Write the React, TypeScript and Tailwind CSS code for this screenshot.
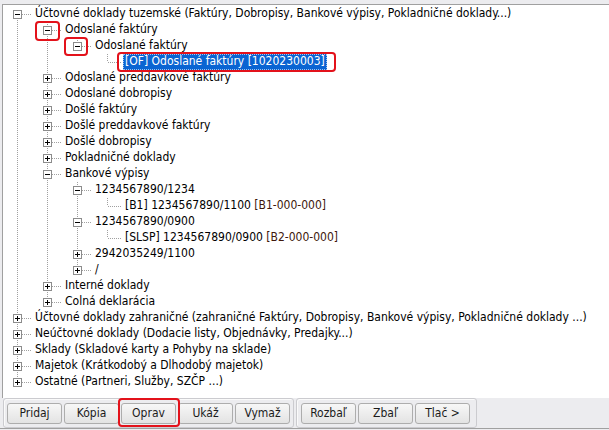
import type { ReactNode } from 'react';

type Node = {
  label: ReactNode;
  children?: Node[];
  expanded?: boolean;
  selected?: boolean;
};

type FlatRow = {
  node: Node;
  level: number;
  lines: boolean[];
  hasNext: boolean;
  first: boolean;
};

const code = (s: string) => <span className="text-[#40180c]">{s}</span>;

const tree: Node[] = [
  {
    label: 'Účtovné doklady tuzemské (Faktúry, Dobropisy, Bankové výpisy, Pokladničné doklady...)',
    expanded: true,
    children: [
      {
        label: 'Odoslané faktúry',
        expanded: true,
        children: [
          {
            label: 'Odoslané faktúry',
            expanded: true,
            children: [{ label: '[OF] Odoslané faktúry [1020230003]', selected: true }],
          },
        ],
      },
      { label: 'Odoslané preddavkové faktúry', children: [] },
      { label: 'Odoslané dobropisy', children: [] },
      { label: 'Došlé faktúry', children: [] },
      { label: 'Došlé preddavkové faktúry', children: [] },
      { label: 'Došlé dobropisy', children: [] },
      { label: 'Pokladničné doklady', children: [] },
      {
        label: 'Bankové výpisy',
        expanded: true,
        children: [
          {
            label: '1234567890/1234',
            expanded: true,
            children: [{ label: <>[B1] 1234567890/1100 {code('[B1-000-000]')}</> }],
          },
          {
            label: '1234567890/0900',
            expanded: true,
            children: [{ label: <>[SLSP] 1234567890/0900 {code('[B2-000-000]')}</> }],
          },
          { label: '2942035249/1100', children: [] },
          { label: '/', children: [] },
        ],
      },
      { label: 'Interné doklady', children: [] },
      { label: 'Colná deklarácia', children: [] },
    ],
  },
  { label: 'Účtovné doklady zahraničné (zahraničné Faktúry, Dobropisy, Bankové výpisy, Pokladničné doklady ...)', children: [] },
  { label: 'Neúčtovné doklady (Dodacie listy, Objednávky, Predajky...)', children: [] },
  { label: 'Sklady (Skladové karty a Pohyby na sklade)', children: [] },
  { label: 'Majetok (Krátkodobý a Dlhodobý majetok)', children: [] },
  { label: 'Ostatné (Partneri, Služby, SZČP ...)', children: [] },
];

const flatten = (nodes: Node[], level = 0, lines: boolean[] = []): FlatRow[] =>
  nodes.flatMap((node, i) => {
    const hasNext = i < nodes.length - 1;
    const row: FlatRow = { node, level, lines, hasNext, first: level === 0 && i === 0 };
    const kids = node.expanded && node.children ? flatten(node.children, level + 1, [...lines, hasNext]) : [];
    return [row, ...kids];
  });

const IND = 30;
const DOT = '#a0a0a0';

const TreeRow = ({ row }: { row: FlatRow }) => {
  const { node, level, lines, hasNext, first } = row;
  const w = IND * level + IND;
  const cx = 14 + IND * level;
  const hasBox = node.children !== undefined;
  const dot = { stroke: DOT, strokeDasharray: '1 1', shapeRendering: 'crispEdges' as const };

  return (
    <div className="flex h-[16px] items-center">
      <svg width={w} height={16} className="shrink-0">
        {lines.map((on, k) =>
          on ? <line key={k} x1={14 + IND * k + 0.5} y1={0} x2={14 + IND * k + 0.5} y2={16} {...dot} /> : null,
        )}
        {!first && <line x1={cx + 0.5} y1={0} x2={cx + 0.5} y2={8} {...dot} />}
        {hasNext && <line x1={cx + 0.5} y1={8} x2={cx + 0.5} y2={16} {...dot} />}
        <line x1={cx + 1} y1={8.5} x2={w - 2} y2={8.5} {...dot} />
        {hasBox && (
          <g shapeRendering="crispEdges">
            <rect x={cx - 4 + 0.5} y={4.5} width={8} height={8} fill="#fff" stroke="#8c8c8c" />
            <line x1={cx - 2} y1={8.5} x2={cx + 3} y2={8.5} stroke="#000" />
            {!node.expanded && <line x1={cx + 0.5} y1={6} x2={cx + 0.5} y2={11} stroke="#000" />}
          </g>
        )}
      </svg>
      <span
        className={
          node.selected
            ? 'h-[16px] whitespace-nowrap bg-[#0a64d2] px-[2px] leading-[15px] text-white outline-1 outline-dotted outline-offset-[-1px] outline-[#9ec4f0]'
            : 'h-[16px] whitespace-nowrap px-[2px] leading-[15px] text-black'
        }
      >
        {node.label}
      </span>
    </div>
  );
};

const Btn = ({ children }: { children: ReactNode }) => (
  <button className="flex h-[21px] w-[55px] items-center justify-center rounded-[3px] border border-[#adadad] bg-gradient-to-b from-[#f7f7f7] to-[#e3e3e3] text-[12px] text-[#1b1b1b]">
    {children}
  </button>
);

const Mark = ({ cls }: { cls: string }) => (
  <div className={`pointer-events-none absolute rounded-[4px] border-2 border-[#e3121b] ${cls}`} />
);

export default function App() {
  const rows = flatten(tree);
  return (
    <div
      className="relative h-[430px] w-[609px] overflow-hidden bg-[#ececef] text-[12px]"
      style={{ fontFamily: '"DejaVu Sans Condensed", "DejaVu Sans", sans-serif' }}
    >
      <div className="h-[4px]" />
      <div className="ml-[2px] h-[394px] border-l border-t border-[#a0a0a0] bg-white pt-[1px]">
        {rows.map((r, i) => (
          <TreeRow key={i} row={r} />
        ))}
      </div>
      <div className="flex h-[31px] items-start gap-[2px] border-b border-[#a0a0a0] pl-[3px]">
        <div className="flex h-[30px] items-center gap-[2px] rounded-[3px] border border-[#cbcbcf] px-[3px] shadow-[inset_1px_1px_0_#fafafa]">
          <Btn>Pridaj</Btn>
          <Btn>Kópia</Btn>
          <Btn>Oprav</Btn>
          <Btn>Ukáž</Btn>
          <Btn>Vymaž</Btn>
        </div>
        <div className="flex h-[30px] items-center gap-[2px] rounded-[3px] border border-[#cbcbcf] pl-[4px] pr-[6px] shadow-[inset_1px_1px_0_#fafafa]">
          <Btn>Rozbaľ</Btn>
          <Btn>Zbaľ</Btn>
          <Btn>Tlač &gt;</Btn>
        </div>
      </div>
      <Mark cls="left-[35px] top-[21px] h-[20px] w-[25px]" />
      <Mark cls="left-[64px] top-[37px] h-[19px] w-[24px]" />
      <Mark cls="left-[117px] top-[52px] h-[20px] w-[219px]" />
      <Mark cls="left-[118px] top-[398px] h-[29px] w-[62px]" />
    </div>
  );
}
